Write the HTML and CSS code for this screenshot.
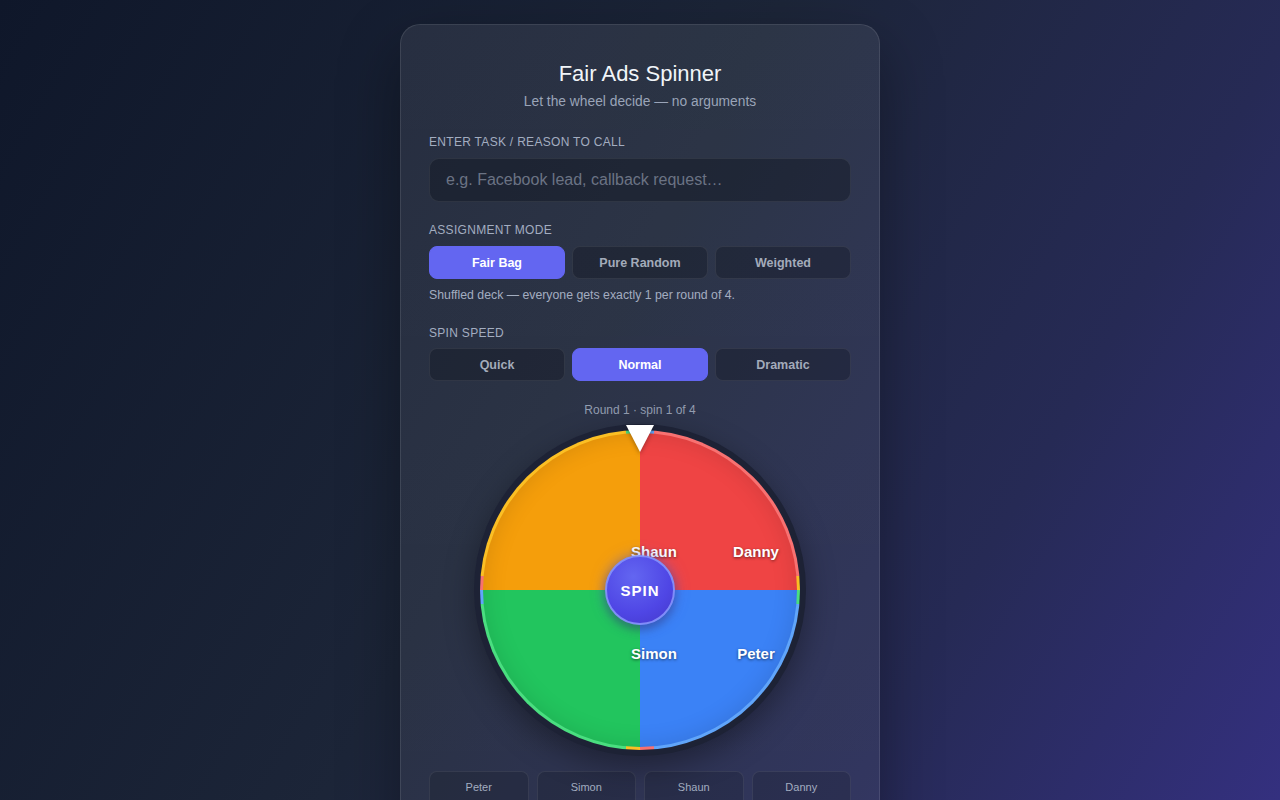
FILE: index.html
```html
<!DOCTYPE html>
<html lang="en">
<head>
<meta charset="utf-8">
<title>Fair Ads Spinner</title>
<link rel="stylesheet" href="styles.css">
</head>
<body>
<main class="card">
  <h1 class="title">Fair Ads Spinner</h1>
  <p class="subtitle">Let the wheel decide — no arguments</p>

  <label class="label label-task" for="task">Enter task / reason to call</label>
  <input id="task" class="input" type="text" placeholder="e.g. Facebook lead, callback request…">

  <div class="label label-mode">Assignment mode</div>
  <div class="seg seg-mode">
    <button class="seg-btn active">Fair Bag</button>
    <button class="seg-btn">Pure Random</button>
    <button class="seg-btn">Weighted</button>
  </div>
  <p class="hint">Shuffled deck — everyone gets exactly 1 per round of 4.</p>

  <div class="label label-speed">Spin speed</div>
  <div class="seg seg-speed">
    <button class="seg-btn">Quick</button>
    <button class="seg-btn active">Normal</button>
    <button class="seg-btn">Dramatic</button>
  </div>

  <p class="round">Round 1 · spin 1 of 4</p>

  <div class="wheel-wrap">
    <div class="wheel-ring">
      <div class="wheel-rim">
        <div class="wheel-face"></div>
      </div>
      <span class="wlabel wl-shaun">Shaun</span>
      <span class="wlabel wl-danny">Danny</span>
      <span class="wlabel wl-simon">Simon</span>
      <span class="wlabel wl-peter">Peter</span>
      <button class="hub">SPIN</button>
      <div class="pointer"></div>
    </div>
  </div>

  <div class="chips">
    <div class="chip">Peter</div>
    <div class="chip">Simon</div>
    <div class="chip">Shaun</div>
    <div class="chip">Danny</div>
  </div>
</main>
</body>
</html>
```

FILE: styles.css
```css
html, body {
  margin: 0;
  height: 100%;
}
body {
  background: linear-gradient(120deg, #0f172a 0%, #1c2538 45%, #262a55 75%, #34307f 100%);
  font-family: "Liberation Sans", Arial, sans-serif;
  display: flex;
  justify-content: center;
  align-items: flex-start;
  padding-top: 24px;
  box-sizing: border-box;
  overflow: hidden;
  color: #e5e7eb;
}
.card {
  width: 480px;
  box-sizing: border-box;
  padding: 35px 28px 40px;
  border-radius: 20px;
  border: 1px solid rgba(255, 255, 255, 0.1);
  background: linear-gradient(180deg, rgba(255, 255, 255, 0.075) 0%, rgba(255, 255, 255, 0.06) 100%);
  box-shadow: 0 24px 60px rgba(0, 0, 0, 0.35);
  display: flex;
  flex-direction: column;
}
.title {
  margin: 0;
  font-size: 22px;
  line-height: 28px;
  font-weight: 400;
  text-align: center;
  color: #f1f5f9;
}
.subtitle {
  margin: 5px 0 0;
  font-size: 13.8px;
  line-height: 18px;
  text-align: center;
  color: #9aa4b8;
}
.label {
  display: block;
  font-size: 12px;
  line-height: 16px;
  letter-spacing: 0.3px;
  text-transform: uppercase;
  color: #a3adc0;
}
.label-task { margin-top: 23px; }
.label-mode { margin-top: 20px; }
.label-speed { margin-top: 22px; }
.input {
  margin-top: 8px;
  height: 44px;
  box-sizing: border-box;
  width: 100%;
  border-radius: 10px;
  border: 1px solid rgba(255, 255, 255, 0.08);
  background: rgba(10, 14, 24, 0.35);
  padding: 0 16px;
  font-family: "Liberation Sans", Arial, sans-serif;
  font-size: 16px;
  color: #e5e7eb;
  outline: none;
}
.input::placeholder { color: #6b7384; }
.seg {
  display: grid;
  grid-template-columns: repeat(3, 1fr);
  gap: 7px;
}
.seg-mode { margin-top: 8px; }
.seg-speed { margin-top: 7px; }
.seg-btn {
  height: 33px;
  border-radius: 8px;
  border: 1px solid rgba(255, 255, 255, 0.08);
  background: rgba(10, 14, 24, 0.3);
  color: #a3abba;
  font-family: "Liberation Sans", Arial, sans-serif;
  font-weight: 700;
  font-size: 12.5px;
  cursor: pointer;
}
.seg-btn.active {
  background: #6366f1;
  border-color: #6366f1;
  color: #ffffff;
}
.hint {
  margin: 8px 0 0;
  font-size: 12.3px;
  line-height: 16px;
  color: #a3adc0;
}
.round {
  margin: 21px 0 0;
  font-size: 12px;
  line-height: 16px;
  text-align: center;
  color: #939db0;
}
.wheel-wrap {
  margin-top: 6px;
  display: flex;
  justify-content: center;
}
.wheel-ring {
  position: relative;
  width: 332px;
  height: 332px;
  border-radius: 50%;
  background: #1d2235;
  box-shadow: 0 10px 30px rgba(0, 0, 0, 0.35);
  display: flex;
  align-items: center;
  justify-content: center;
}
.wheel-rim {
  width: 320px;
  height: 320px;
  border-radius: 50%;
  background: conic-gradient(
    #60a5fa 0deg 5deg, #f87171 5deg 85deg, #fbbf24 85deg 90deg,
    #4ade80 90deg 95deg, #60a5fa 95deg 175deg, #f87171 175deg 180deg,
    #fbbf24 180deg 185deg, #4ade80 185deg 265deg, #60a5fa 265deg 270deg,
    #f87171 270deg 275deg, #fbbf24 275deg 355deg, #4ade80 355deg 360deg);
  display: flex;
  align-items: center;
  justify-content: center;
}
.wheel-face {
  width: 314px;
  height: 314px;
  border-radius: 50%;
  background: conic-gradient(#ef4444 0deg 90deg, #3b82f6 90deg 180deg, #22c55e 180deg 270deg, #f59e0b 270deg 360deg);
  box-shadow: inset 0 0 24px rgba(0, 0, 0, 0.12);
}
.wlabel {
  position: absolute;
  transform: translate(-50%, -50%);
  font-size: 15px;
  font-weight: 700;
  color: #ffffff;
  text-shadow: 0 1px 3px rgba(0, 0, 0, 0.55);
  white-space: nowrap;
}
.wl-shaun { left: 180px; top: 127px; }
.wl-danny { left: 282px; top: 127px; }
.wl-simon { left: 180px; top: 229px; }
.wl-peter { left: 282px; top: 229px; }
.hub {
  position: absolute;
  left: 131px;
  top: 131px;
  width: 70px;
  height: 70px;
  border-radius: 50%;
  border: 2px solid #818cf8;
  background: radial-gradient(circle at 40% 30%, #6366f1 0%, #4f46e5 60%, #4338ca 100%);
  box-shadow: 0 0 14px rgba(99, 102, 241, 0.55), 0 4px 10px rgba(0, 0, 0, 0.35);
  color: #ffffff;
  font-family: "Liberation Sans", Arial, sans-serif;
  font-size: 15px;
  font-weight: 700;
  letter-spacing: 1px;
  cursor: pointer;
}
.pointer {
  position: absolute;
  left: 152px;
  top: 1px;
  width: 0;
  height: 0;
  border-left: 14px solid transparent;
  border-right: 14px solid transparent;
  border-top: 27px solid #ffffff;
  filter: drop-shadow(0 2px 2px rgba(0, 0, 0, 0.3));
}
.chips {
  margin-top: 15px;
  display: grid;
  grid-template-columns: repeat(4, 1fr);
  gap: 8px;
}
.chip {
  height: 44px;
  padding-top: 9px;
  box-sizing: border-box;
  border-radius: 8px;
  border: 1px solid rgba(255, 255, 255, 0.08);
  background: rgba(10, 14, 24, 0.18);
  font-size: 11px;
  line-height: 12px;
  text-align: center;
  color: #a3adc0;
}
```
